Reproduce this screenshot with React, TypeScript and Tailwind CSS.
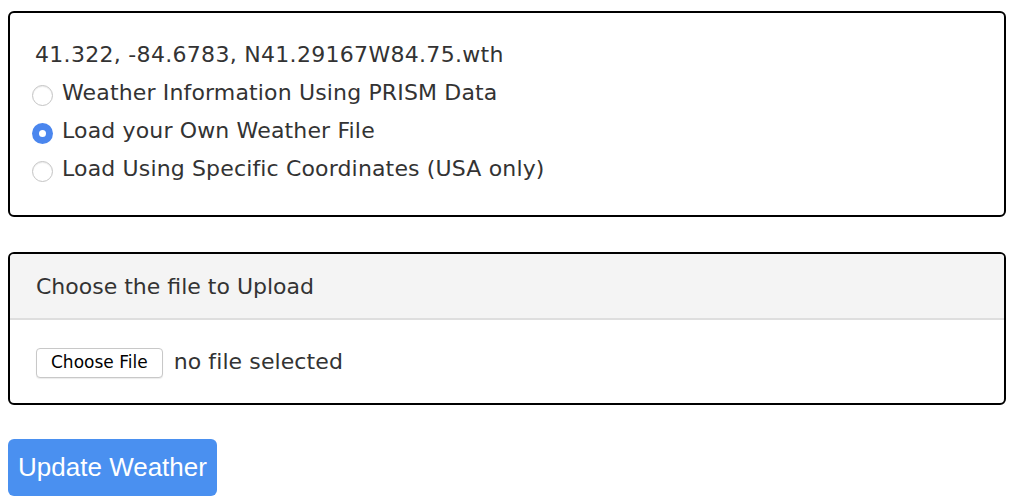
import React from 'react'

const options = [
    { label: 'Weather Information Using PRISM Data', checked: false },
    { label: 'Load your Own Weather File', checked: true },
    { label: 'Load Using Specific Coordinates (USA only)', checked: false },
]

function Radio({ checked }: { checked: boolean }) {
    if (checked) {
        return (
            <span className="w-[21px] h-[21px] rounded-full bg-[#4a86ee] flex items-center justify-center shrink-0 mt-[4px]">
                <span className="w-[7px] h-[7px] rounded-full bg-white" />
            </span>
        )
    }
    return <span className="w-[21px] h-[21px] rounded-full border border-[#c4c4c4] bg-white shrink-0 mt-[4px] shadow-[inset_0_1px_1px_rgba(0,0,0,0.08)]" />
}

export default function App() {
    return (
        <div className="bg-white min-h-screen pt-[11px] px-[8px] text-[#333] font-['DejaVu_Sans',sans-serif]">
            <div className="w-[998px] border-2 border-black rounded-[6px] pt-[23px] pl-[25px] h-[206px]">
                <div className="text-[22px] leading-[38px] tracking-[0.3px]">41.322, -84.6783, N41.29167W84.75.wth</div>
                {options.map((o) => (
                    <label key={o.label} className="flex items-center gap-[9px] -ml-[3px] text-[22px] leading-[38px] tracking-[0.15px]">
                        <Radio checked={o.checked} />
                        <span>{o.label}</span>
                    </label>
                ))}
            </div>

            <div className="w-[998px] mt-[35px] border-2 border-black rounded-[6px] overflow-hidden h-[153px]">
                <div className="bg-[#f4f4f4] h-[66px] pl-[26px] flex items-center border-b-2 border-[#dedede] text-[22px] tracking-[0px]">
                    Choose the file to Upload
                </div>
                <div className="pl-[26px] pt-[27px] flex items-center gap-[11px]">
                    <button className="h-[30px] px-[14px] rounded-[4px] border border-[#c8c8c8] bg-white text-[17px] text-black shadow-[0_1px_1px_rgba(0,0,0,0.08)]">
                        Choose File
                    </button>
                    <span className="text-[22px] tracking-[0.1px] -mt-[2px]">no file selected</span>
                </div>
            </div>

            <button className="mt-[34px] w-[209px] h-[57px] rounded-[6px] bg-[#4a90f0] text-white text-[26px] font-['Liberation_Sans',sans-serif]">
                Update Weather
            </button>
        </div>
    )
}
